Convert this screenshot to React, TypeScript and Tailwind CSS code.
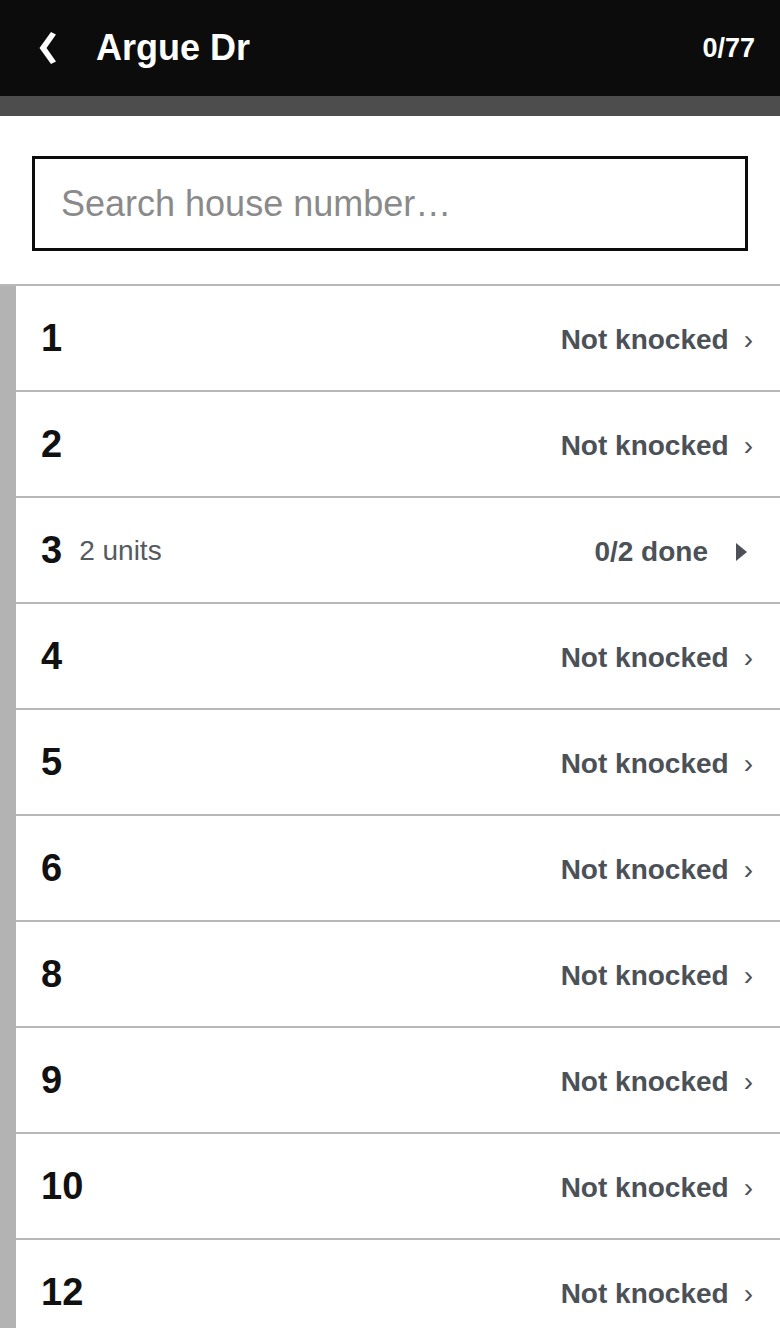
import React, { useState } from 'react';

type House = {
  number: string;
  units?: number;
  done?: number;
};

const houses: House[] = [
  { number: '1' },
  { number: '2' },
  { number: '3', units: 2, done: 0 },
  { number: '4' },
  { number: '5' },
  { number: '6' },
  { number: '8' },
  { number: '9' },
  { number: '10' },
  { number: '12' },
];

const BackIcon = () => (
  <svg width="20" height="34" viewBox="0 0 20 34" className="block">
    <path d="M14 1 L2.5 17 L14 33 L19 30.5 L9.5 17 L19 3.5 Z" fill="#ffffff" />
  </svg>
);

const Triangle = () => (
  <svg width="11" height="18" viewBox="0 0 11 18" className="block">
    <path d="M0 0 L11 9 L0 18 Z" fill="#4b5157" />
  </svg>
);

const HouseRow: React.FC<{ house: House }> = ({ house }) => {
  const multi = house.units !== undefined;
  return (
    <div className="flex h-[106px] items-center border-t-2 border-[#b8b8b8] pl-[25px] pr-[27px]">
      <span className="text-[38px] font-bold leading-none text-[#111]">{house.number}</span>
      {multi && (
        <span className="ml-[17px] mt-[2px] text-[28px] leading-none text-[#555a5e]">{house.units} units</span>
      )}
      <div className="ml-auto mt-[3px] flex items-center">
        {multi ? (
          <>
            <span className="text-[28px] font-bold leading-none text-[#4b5157]">
              {house.done}/{house.units} done
            </span>
            <span className="ml-[28px] mr-[6px]">
              <Triangle />
            </span>
          </>
        ) : (
          <>
            <span className="text-[28px] font-bold leading-none text-[#4b5157]">Not knocked</span>
            <span className="ml-[15px] text-[28px] leading-none text-[#4b5157]">›</span>
          </>
        )}
      </div>
    </div>
  );
};

export default function App() {
  const [query, setQuery] = useState('');

  const visible = houses.filter((h) => h.number.startsWith(query.trim()));

  return (
    <div
      className="h-[1328px] w-[780px] overflow-hidden bg-white"
      style={{ fontFamily: '"Liberation Sans", Arial, sans-serif' }}
    >
      {/* Header */}
      <div className="flex h-[96px] items-center bg-[#0c0c0c] pl-[37px] pr-[25px] text-white">
        <BackIcon />
        <h1 className="ml-[39px] text-[36px] font-bold leading-none">Argue Dr</h1>
        <span className="ml-auto text-[27px] font-bold leading-none">0/77</span>
      </div>
      <div className="h-[20px] bg-[#4d4d4d]" />

      {/* Search */}
      <div className="px-[32px] pb-[33px] pt-[40px]">
        <input
          type="text"
          value={query}
          onChange={(e) => setQuery(e.target.value)}
          placeholder="Search house number…"
          className="h-[95px] w-full border-[3px] border-[#0c0c0c] px-[26px] text-[36px] text-[#222] placeholder-[#8a8a8a] outline-none"
        />
      </div>

      {/* House list */}
      <div className="flex">
        <div className="w-[16px] shrink-0 border-t-2 border-[#b8b8b8] bg-[#b3b3b3]" />
        <div className="flex-1">
          {visible.map((h) => (
            <HouseRow key={h.number} house={h} />
          ))}
        </div>
      </div>
    </div>
  );
}
